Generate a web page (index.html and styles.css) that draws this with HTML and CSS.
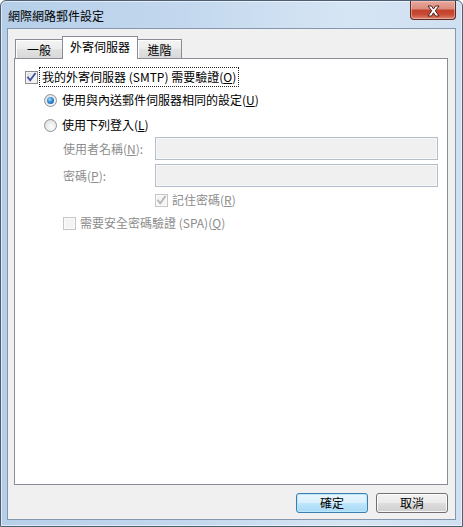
FILE: index.html
```html
<!DOCTYPE html>
<html lang="zh-Hant">
<head>
<meta charset="utf-8">
<title>網際網路郵件設定</title>
<link rel="stylesheet" href="styles.css">
</head>
<body>
<div class="window">
  <div class="titlebar">
    <span class="title">網際網路郵件設定</span>
    <div class="close">
      <svg width="13" height="12" viewBox="0 0 13 12"><path d="M1 1 H4.5 L6.5 4 L8.5 1 H12 L8.3 5.8 L12 11 H8.5 L6.5 7.8 L4.5 11 H1 L4.7 5.8 Z" fill="#fff" stroke="#50231b" stroke-width="1" stroke-linejoin="round"/></svg>
    </div>
  </div>
  <div class="client">
    <div class="tabs">
      <div class="tab t1">一般</div>
      <div class="tab t2 active">外寄伺服器</div>
      <div class="tab t3">進階</div>
    </div>
    <div class="panel">
      <div class="row r-auth">
        <span class="cb checked"><svg width="11" height="11" viewBox="0 0 11 11"><path d="M2 5.5 L4.2 8.3 L9 1.8" fill="none" stroke="#3f4f9e" stroke-width="1.8" stroke-linecap="square"/></svg></span>
        <span class="focus">我的外寄伺服器 (SMTP) 需要驗證(<u>O</u>)</span>
      </div>
      <div class="row r-radio1">
        <span class="radio on"><span class="dot"></span></span>
        <span class="lbl">使用與內送郵件伺服器相同的設定(<u>U</u>)</span>
      </div>
      <div class="row r-radio2">
        <span class="radio"></span>
        <span class="lbl">使用下列登入(<u>L</u>)</span>
      </div>
      <div class="row field r-user">
        <span class="flabel dis">使用者名稱(<u>N</u>):</span>
        <span class="input"></span>
      </div>
      <div class="row field r-pass">
        <span class="flabel dis">密碼(<u>P</u>):</span>
        <span class="input"></span>
      </div>
      <div class="row r-remember">
        <span class="cb disabled checked"><svg width="11" height="11" viewBox="0 0 11 11"><path d="M2 5.5 L4.2 8.3 L9 1.8" fill="none" stroke="#b4b4b4" stroke-width="1.8" stroke-linecap="square"/></svg></span>
        <span class="lbl dis">記住密碼(<u>R</u>)</span>
      </div>
      <div class="row r-spa">
        <span class="cb disabled"></span>
        <span class="lbl dis">需要安全密碼驗證 (SPA)(<u>Q</u>)</span>
      </div>
    </div>
    <div class="buttons">
      <div class="btn default">確定</div>
      <div class="btn">取消</div>
    </div>
  </div>
</div>
</body>
</html>
```
FILE: styles.css
```css
* { box-sizing: border-box; }
html, body { margin: 0; padding: 0; }
body {
  width: 463px;
  height: 527px;
  font-family: "Noto Sans CJK TC", "Noto Sans", sans-serif;
  font-size: 12px;
  line-height: 16px;
  color: #000;
  background: #fff;
  overflow: hidden;
}
.window {
  width: 463px;
  height: 527px;
  border: 1px solid #4f5f73;
  border-radius: 6px 6px 0 0;
  background: linear-gradient(to right, #b6cfe9 0%, #c3d8ee 40%, #d6e5f4 75%, #cfe0f2 100%);
  box-shadow: inset 0 0 0 1px rgba(255,255,255,0.55);
  display: flex;
  flex-direction: column;
  padding: 0 6px 6px 6px;
}
.titlebar {
  height: 27px;
  display: flex;
  align-items: flex-start;
  justify-content: space-between;
  margin-right: 0;
}
.title {
  margin-top: 7px;
  padding-left: 1px;
  font-size: 12px;
  color: #000;
  line-height: 16px;
}
.close {
  width: 46px;
  height: 19px;
  border: 1px solid #5b2a22;
  border-top: none;
  border-radius: 0 0 4px 4px;
  background: linear-gradient(#e8a99c 0%, #d98a7b 45%, #c4412b 50%, #c84b36 75%, #dc8573 100%);
  box-shadow: inset 0 0 0 1px rgba(255,220,210,0.45);
  display: flex;
  align-items: center;
  justify-content: center;
}
.close svg { display: block; margin-top: 1px; }
.client {
  flex: 1;
  border: 1px solid #8497ad;
  background: #f0f0f0;
  display: flex;
  flex-direction: column;
}
.tabs {
  display: flex;
  align-items: flex-end;
  height: 22px;
  margin: 7px 0 0 7px;
}
.tab {
  height: 19px;
  border: 1px solid #898c95;
  border-bottom: none;
  background: linear-gradient(#f4f4f4 0%, #ececec 50%, #e2e2e2 51%, #d9d9d9 100%);
  box-shadow: inset 1px 1px 0 #fff;
  text-align: center;
  line-height: 17px;
  padding-top: 1px;
}
.t1 { width: 48px; }
.t2 { width: 76px; margin-left: -1px; }
.t3 { width: 45px; margin-left: -1px; }
.tab.active {
  height: 23px;
  margin-bottom: -1px;
  background: #fff;
  box-shadow: none;
  position: relative;
  z-index: 1;
  line-height: 18px;
  padding-top: 1px;
}
.panel {
  margin-left: 6px;
  width: 434px;
  height: 427px;
  border: 1px solid #898c95;
  background: #fff;
  display: flex;
  flex-direction: column;
  padding: 8px 9px 0 10px;
}
.row {
  display: flex;
  align-items: center;
  height: 20px;
}
.r-radio1 { margin-left: 19px; margin-top: 3px; }
.r-radio2 { margin-left: 19px; margin-top: 5px; }
.field { margin-left: 38px; height: 23px; }
.r-user { margin-top: 2px; }
.r-pass { margin-top: 4px; }
.r-remember { margin-left: 130px; margin-top: 3px; }
.r-spa { margin-left: 38px; margin-top: 3px; }

.cb {
  width: 13px;
  height: 13px;
  flex: none;
  border: 1px solid #8e8f8f;
  background: linear-gradient(135deg, #dadbdc 0%, #eeeeef 55%, #fbfbfb 100%);
  box-shadow: inset 0 0 0 1px #f4f4f4;
  display: flex;
  align-items: center;
  justify-content: center;
}
.cb svg { display: block; }
.cb.disabled {
  border-color: #c6c6c6;
  background: #f4f4f4;
  box-shadow: inset 0 0 0 1px #fafafa;
}
.focus {
  margin-left: 1px;
  border: 1px dotted #222;
  padding: 1px 2px 1px 2px;
  line-height: 16px;
}
.radio {
  width: 13px;
  height: 13px;
  flex: none;
  border-radius: 50%;
  border: 1px solid #8f9296;
  background: radial-gradient(circle at 60% 65%, #fcfcfc 0%, #e9eaea 55%, #d2d4d6 100%);
  display: flex;
  align-items: center;
  justify-content: center;
}
.radio .dot {
  width: 7px;
  height: 7px;
  border-radius: 50%;
  background: radial-gradient(circle at 40% 35%, #a6e0ff 0%, #3d90d6 40%, #0f4a8c 100%);
}
.lbl { margin-left: 5px; }
.cb + .lbl { margin-left: 4px; }
.dis { color: #8d8d8d; }
.flabel { width: 92px; flex: none; }
.input {
  flex: 1;
  height: 23px;
  border: 1px solid #b5bfcc;
  background: #f0f0f0;
  box-shadow: inset 0 0 0 1px #f7f7f7;
}
.buttons {
  display: flex;
  justify-content: flex-end;
  gap: 8px;
  margin-top: 8px;
  padding-right: 7px;
}
.btn {
  width: 72px;
  height: 20px;
  border: 1px solid #707070;
  border-radius: 3px;
  background: linear-gradient(#f2f2f2 0%, #ebebeb 50%, #dddddd 51%, #cfcfcf 100%);
  box-shadow: inset 0 0 0 1px rgba(255,255,255,0.8);
  text-align: center;
  line-height: 18px;
}
.btn.default {
  border-color: #3c7fb1;
  background: linear-gradient(#eaf6fd 0%, #d9f0fc 50%, #bee6fd 51%, #a7d9f5 100%);
  box-shadow: inset 0 0 0 1px #b9e7fc;
}
```
